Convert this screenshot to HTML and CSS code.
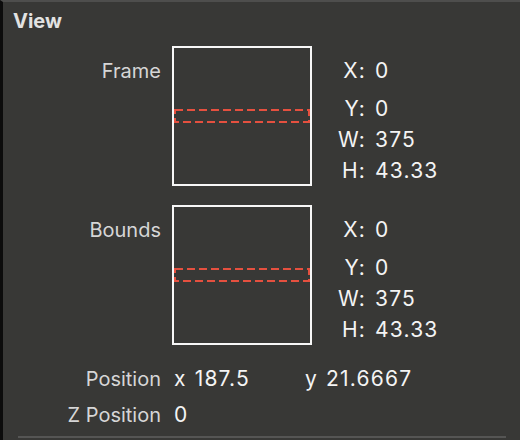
FILE: index.html
```html
<!DOCTYPE html>
<html lang="en">
<head>
    <meta charset="UTF-8">
    <meta name="viewport" content="width=device-width, initial-scale=1.0">
    <title>View Inspector</title>
    <link rel="stylesheet" href="styles.css">
</head>
<body>
    <div class="panel">
        <h1 class="panel-title">View</h1>

        <div class="rect-section">
            <div class="rect-label">Frame</div>
            <div class="rect-box">
                <svg class="rect-marker" width="136" height="14" viewBox="0 0 136 14">
                    <rect x="1" y="1" width="134" height="12" fill="none" stroke="#e5503f" stroke-width="2" stroke-dasharray="8 4"/>
                </svg>
            </div>
            <div class="coord-list">
                <span class="coord-key">X:</span><span class="coord-val">0</span>
                <span class="coord-key mid">Y:</span><span class="coord-val mid">0</span>
                <span class="coord-key">W:</span><span class="coord-val">375</span>
                <span class="coord-key">H:</span><span class="coord-val">43.33</span>
            </div>
        </div>

        <div class="rect-section bounds">
            <div class="rect-label">Bounds</div>
            <div class="rect-box">
                <svg class="rect-marker" width="136" height="14" viewBox="0 0 136 14">
                    <rect x="1" y="1" width="134" height="12" fill="none" stroke="#e5503f" stroke-width="2" stroke-dasharray="8 4"/>
                </svg>
            </div>
            <div class="coord-list">
                <span class="coord-key">X:</span><span class="coord-val">0</span>
                <span class="coord-key mid">Y:</span><span class="coord-val mid">0</span>
                <span class="coord-key">W:</span><span class="coord-val">375</span>
                <span class="coord-key">H:</span><span class="coord-val">43.33</span>
            </div>
        </div>

        <div class="prop-row position">
            <div class="prop-label">Position</div>
            <div class="prop-pair first">
                <span class="axis">x</span><span class="prop-val">187.5</span>
            </div>
            <div class="prop-pair">
                <span class="axis">y</span><span class="prop-val">21.6667</span>
            </div>
        </div>

        <div class="prop-row z-row">
            <div class="prop-label">Z Position</div>
            <div class="prop-pair">
                <span class="prop-val">0</span>
            </div>
        </div>

        <div class="divider"></div>
    </div>
</body>
</html>
```

FILE: styles.css
```css
body {
    margin: 0;
    padding: 0;
    font-family: Inter, "Liberation Sans", Arial, sans-serif;
    background-color: #383836;
}
.panel {
    width: 520px;
    height: 440px;
    box-sizing: border-box;
    border-left: 3px solid #0c0c0c;
    border-top: 2px solid #4e4e4d;
    background-color: #383836;
    padding-top: 7px;
    overflow: hidden;
    font-size: 20px;
    line-height: 24px;
}
.panel-title {
    margin: 0 0 0 10px;
    font-size: 20px;
    line-height: 24px;
    font-weight: bold;
    color: #e2e2e2;
}
.rect-section {
    display: flex;
    align-items: flex-start;
    margin-top: 13px;
}
.rect-section.bounds {
    margin-top: 19px;
}
.rect-label {
    width: 158px;
    padding-top: 13px;
    text-align: right;
    color: #d6d6d6;
}
.rect-box {
    width: 140px;
    height: 140px;
    box-sizing: border-box;
    margin-left: 11px;
    border: 2px solid #f7f7f7;
    display: flex;
    align-items: center;
}
.rect-marker {
    display: block;
}
/* numeric readouts are a touch larger and looser than the labels */
.coord-list,
.prop-pair {
    font-size: 21px;
    letter-spacing: 1.2px;
    color: #f4f4f4;
}
.coord-list {
    display: grid;
    grid-template-columns: 54px auto;
    column-gap: 9px;
    row-gap: 7px;
    padding-top: 13px;
}
.coord-key {
    text-align: right;
}
.coord-list .mid {
    margin-top: 7px;
}
.prop-row {
    display: flex;
    margin-top: 12px;
}
.prop-row.position {
    margin-top: 22px;
}
.prop-label {
    width: 158px;
    text-align: right;
    color: #d6d6d6;
}
.prop-pair {
    display: flex;
    gap: 8px;
    margin-left: 13px;
}
.prop-pair.first {
    width: 118px;
}
.divider {
    height: 2px;
    margin: 9px 14px 0 15px;
    background-color: #555554;
}
```
